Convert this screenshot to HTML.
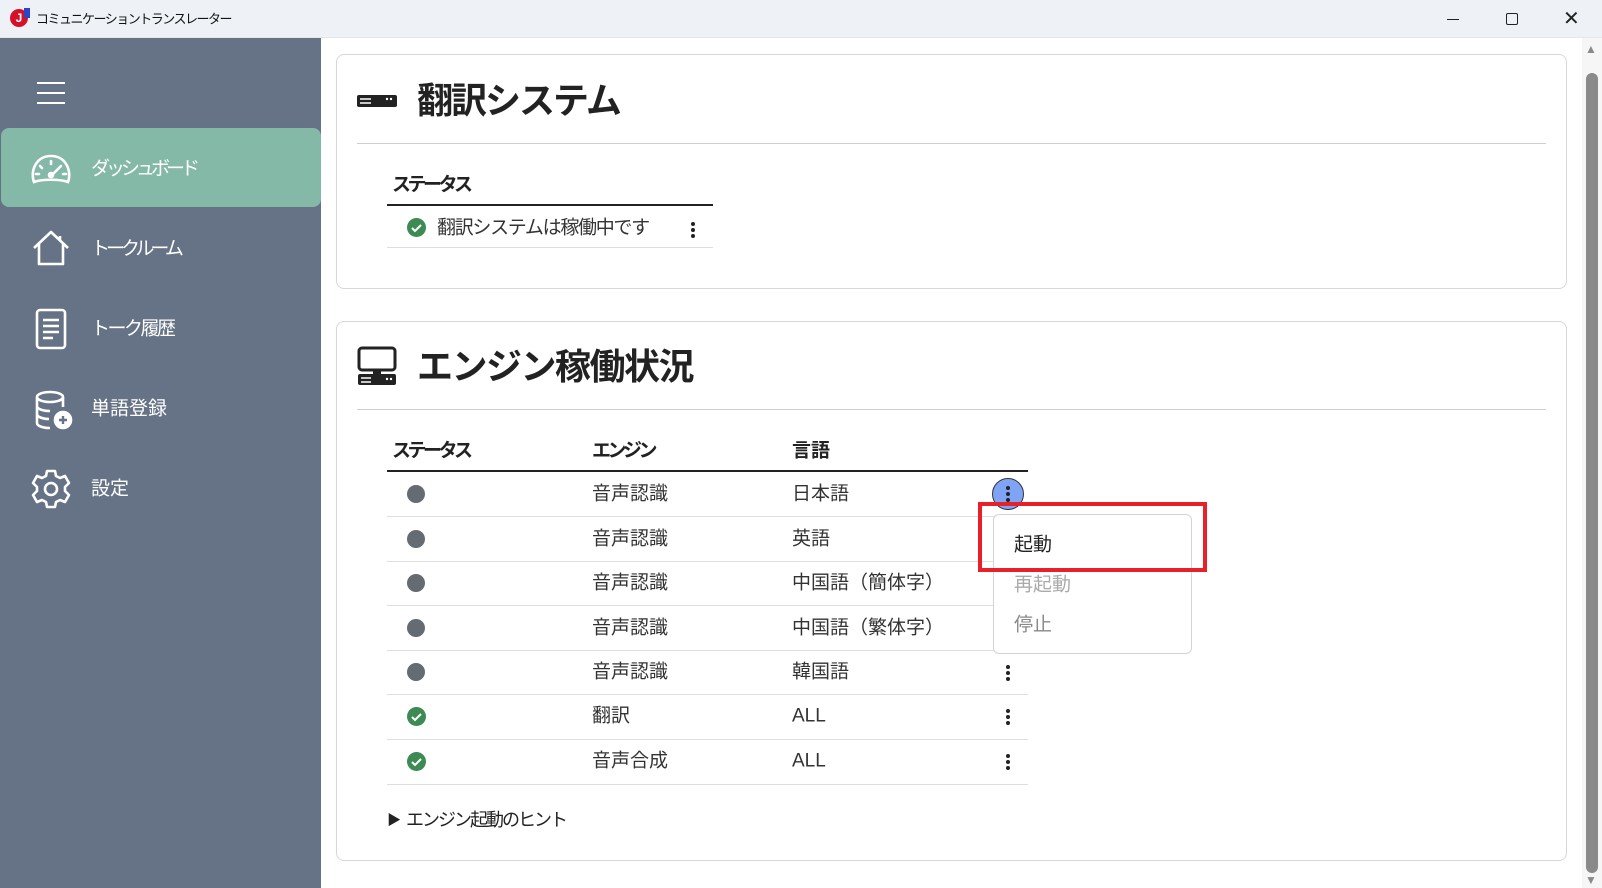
<!DOCTYPE html>
<html><head><meta charset="utf-8"><style>
*{margin:0;padding:0;box-sizing:border-box}
body{width:1602px;height:888px;overflow:hidden;background:#fff;font-family:"Liberation Sans","Noto Sans CJK JP",sans-serif;color:#222;position:relative}
.a{position:absolute}
.t{position:absolute;white-space:nowrap;line-height:1;transform:translateY(-50%)}
.side{left:0;top:38px;width:321px;height:850px;background:#667386}
.st{color:#fff;font-size:19px}
.card{border:1px solid #d8d8d8;border-radius:8px;background:#fff}
.hr{height:1px;background:#cfcfcf}
.row{height:1px;background:#dedede;left:387px;width:641px}
.dot{width:18px;height:18px;border-radius:50%;background:#646b73}
.ok{width:19px;height:19px;border-radius:50%;background:#3d8a55}
.b{font-size:19px;color:#333}
.keb{width:4px}
.keb i{display:block;width:4px;height:4px;border-radius:50%;background:#222;margin-bottom:2px}
</style></head><body>
<div class="a" style="left:0;top:0;width:1602px;height:38px;background:#eef2f7;border-bottom:1px solid #e4e7ea"></div>
<div class="a" style="left:10px;top:9px;width:18px;height:18px;border-radius:50%;background:#d5102a;color:#fff;font:bold 12px 'Liberation Sans';text-align:center;line-height:18px">J</div>
<div class="a" style="left:24px;top:8px;width:6px;height:10px;background:#2b45c9"></div>
<div class="t" style="left:36px;top:19px;font-size:13px;color:#111;letter-spacing:-1.5px">コミュニケーショントランスレーター</div>
<div class="a" style="left:1447px;top:19px;width:12px;height:1px;background:#222"></div>
<div class="a" style="left:1506px;top:13px;width:12px;height:12px;border:1.3px solid #222;border-radius:2px"></div>
<div class="t" style="left:1563px;top:19px;font-size:20px;color:#222">✕</div>
<div class="a side"></div>
<div class="a" style="left:37px;top:82px;width:28px;height:2px;background:#fff;box-shadow:0 10px 0 #fff,0 20px 0 #fff"></div>
<div class="a" style="left:1px;top:128px;width:320px;height:79px;background:#84b9a8;border-radius:8px"></div>
<svg class="a" style="left:30px;top:153px" width="42" height="32" viewBox="0 0 42 32" fill="none" stroke="#fff" stroke-width="2.6" stroke-linecap="round"><path d="M4 29 C0 18 6 3 21 3 C36 3 42 18 38 29 C30 26 12 26 4 29Z"/><path d="M21 8v3M10 13l2 2M6 21h3M33 21h3M31 13l-7 7" /><circle cx="21" cy="22" r="2" fill="#fff"/></svg>
<div class="t st" style="left:91px;top:169px;letter-spacing:-4px">ダッシュボード</div>
<svg class="a" style="left:31px;top:230px" width="40" height="36" viewBox="0 0 40 36" fill="none" stroke="#fff" stroke-width="2.6" stroke-linejoin="round"><path d="M3 18 L20 2 L37 18 M8 14 V34 H32 V14 M29 6 V11"/></svg>
<div class="t st" style="left:91px;top:249px;letter-spacing:-4px">トークルーム</div>
<svg class="a" style="left:35px;top:308px" width="32" height="42" viewBox="0 0 32 42" fill="none" stroke="#fff" stroke-width="2.6"><rect x="2" y="2" width="28" height="38" rx="3"/><path d="M8 12h16M8 18h16M8 24h16M8 30h10"/></svg>
<div class="t st" style="left:91px;top:329px;letter-spacing:-2.5px">トーク履歴</div>
<svg class="a" style="left:34px;top:390px" width="40" height="40" viewBox="0 0 40 40" fill="none" stroke="#fff" stroke-width="2.6"><ellipse cx="16" cy="7" rx="13" ry="5"/><path d="M3 7v26c0 3 6 5 13 5M29 7v10M3 16c0 3 6 5 13 5M3 24c0 3 6 5 12 5"/><circle cx="29" cy="30" r="8" fill="#fff"/><path d="M29 26v8M25 30h8" stroke="#667386" stroke-width="2.4"/></svg>
<div class="t st" style="left:91px;top:409px">単語登録</div>
<svg class="a" style="left:30px;top:468px" width="42" height="42" viewBox="0 0 42 42" fill="none" stroke="#fff" stroke-width="2.6" stroke-linejoin="round"><path d="M17 3h8l1 5 4 2 5-2 4 7-4 4v4l4 4-4 7-5-2-4 2-1 5h-8l-1-5-4-2-5 2-4-7 4-4v-4l-4-4 4-7 5 2 4-2z"/><circle cx="21" cy="21" r="6"/></svg>
<div class="t st" style="left:91px;top:489px">設定</div>
<div class="a" style="left:1582px;top:38px;width:20px;height:850px;background:#f6f6f6"></div>
<div class="t" style="left:1585px;top:49px;font-size:12px;color:#8a8a8a">▲</div>
<div class="a" style="left:1586px;top:73px;width:12px;height:800px;border-radius:6px;background:#8a8a8a"></div>
<div class="t" style="left:1585px;top:880px;font-size:12px;color:#8a8a8a">▼</div>
<div class="a card" style="left:336px;top:54px;width:1231px;height:235px"></div>
<svg class="a" style="left:357px;top:95px" width="40" height="12" viewBox="0 0 40 12"><rect width="40" height="12" rx="2" fill="#222"/><path d="M3 4h11M3 8h11" stroke="#fff" stroke-width="1.5"/><circle cx="30" cy="4" r="1.2" fill="#fff"/><circle cx="34" cy="4" r="1.2" fill="#fff"/></svg>
<div class="t" style="left:417px;top:101px;font-size:36px;font-weight:bold;color:#222;letter-spacing:-2px">翻訳システム</div>
<div class="a hr" style="left:357px;top:143px;width:1189px"></div>
<div class="t" style="left:392px;top:185px;font-size:19px;font-weight:bold;color:#222;letter-spacing:-3.5px">ステータス</div>
<div class="a" style="left:387px;top:204px;width:326px;height:2px;background:#222"></div>
<div class="a ok" style="left:407px;top:218px"></div>
<svg class="a" style="left:407px;top:218px" width="19" height="19"><path d="M5 10l3 3 6-6" stroke="#fff" stroke-width="2" fill="none"/></svg>
<div class="t b" style="left:437px;top:228px;letter-spacing:-1.3px">翻訳システムは稼働中です</div>
<div class="a keb" style="left:691px;top:222px"><i></i><i></i><i></i></div>
<div class="a" style="left:387px;top:247px;width:326px;height:1px;background:#dedede"></div>
<div class="a card" style="left:336px;top:321px;width:1231px;height:540px"></div>
<svg class="a" style="left:357px;top:346px" width="40" height="40" viewBox="0 0 40 40" fill="none"><rect x="2" y="2" width="36" height="22" rx="3" stroke="#222" stroke-width="3"/><rect x="16" y="24" width="8" height="6" fill="#222"/><rect x="1" y="28" width="38" height="11" rx="2" fill="#222"/><path d="M4 32h10M4 36h10" stroke="#fff" stroke-width="1.4"/><circle cx="30" cy="33" r="1.2" fill="#fff"/><circle cx="34" cy="33" r="1.2" fill="#fff"/></svg>
<div class="t" style="left:417px;top:367px;font-size:36px;font-weight:bold;color:#222;letter-spacing:-1.5px">エンジン稼働状況</div>
<div class="a hr" style="left:357px;top:409px;width:1189px"></div>
<div class="t" style="left:392px;top:451px;font-size:19px;font-weight:bold;letter-spacing:-3.5px">ステータス</div>
<div class="t" style="left:592px;top:451px;font-size:19px;font-weight:bold;letter-spacing:-3.5px">エンジン</div>
<div class="t" style="left:792px;top:451px;font-size:19px;font-weight:bold">言語</div>
<div class="a" style="left:387px;top:470px;width:641px;height:2px;background:#222"></div>

<div class="a dot" style="left:407px;top:485px"></div><div class="t b" style="left:592px;top:494px">音声認識</div><div class="t b" style="left:792px;top:494px">日本語</div><div class="a row" style="top:516px"></div>
<div class="a dot" style="left:407px;top:530px"></div><div class="t b" style="left:592px;top:539px">音声認識</div><div class="t b" style="left:792px;top:539px">英語</div><div class="a row" style="top:561px"></div>
<div class="a dot" style="left:407px;top:574px"></div><div class="t b" style="left:592px;top:583px">音声認識</div><div class="t b" style="left:792px;top:583px">中国語（簡体字）</div><div class="a row" style="top:605px"></div>
<div class="a dot" style="left:407px;top:619px"></div><div class="t b" style="left:592px;top:628px">音声認識</div><div class="t b" style="left:792px;top:628px">中国語（繁体字）</div><div class="a row" style="top:650px"></div>
<div class="a dot" style="left:407px;top:663px"></div><div class="t b" style="left:592px;top:672px">音声認識</div><div class="t b" style="left:792px;top:672px">韓国語</div><div class="a row" style="top:694px"></div>
<div class="a keb" style="left:1006px;top:665px"><i></i><i></i><i></i></div>
<div class="a ok" style="left:407px;top:707px"></div><svg class="a" style="left:407px;top:707px" width="19" height="19"><path d="M5 10l3 3 6-6" stroke="#fff" stroke-width="2" fill="none"/></svg>
<div class="t b" style="left:592px;top:716px">翻訳</div><div class="t b" style="left:792px;top:716px">ALL</div><div class="a row" style="top:739px"></div>
<div class="a keb" style="left:1006px;top:709px"><i></i><i></i><i></i></div>
<div class="a ok" style="left:407px;top:752px"></div><svg class="a" style="left:407px;top:752px" width="19" height="19"><path d="M5 10l3 3 6-6" stroke="#fff" stroke-width="2" fill="none"/></svg>
<div class="t b" style="left:592px;top:761px">音声合成</div><div class="t b" style="left:792px;top:761px">ALL</div><div class="a row" style="top:784px"></div>
<div class="a keb" style="left:1006px;top:754px"><i></i><i></i><i></i></div>
<div class="t" style="left:387px;top:820px;font-size:14px;color:#222">▶</div>
<div class="t" style="left:406px;top:820px;font-size:18px;color:#222;letter-spacing:-2px">エンジン起動のヒント</div>
<div class="a" style="left:992px;top:478px;width:32px;height:32px;border-radius:50%;background:#7fa3f5;border:1px solid #333"></div>
<div class="a keb" style="left:1006px;top:486px"><i></i><i></i><i></i></div>
<div class="a" style="left:993px;top:514px;width:199px;height:140px;background:#fff;border:1px solid #d4d4d4;border-radius:6px"></div>
<div class="t" style="left:1014px;top:545px;font-size:19px;color:#222">起動</div>
<div class="t" style="left:1014px;top:585px;font-size:19px;color:#aaa">再起動</div>
<div class="t" style="left:1014px;top:625px;font-size:19px;color:#888">停止</div>
<div class="a" style="left:978px;top:502px;width:229px;height:70px;border:4px solid #e8202a"></div>
</body></html>
